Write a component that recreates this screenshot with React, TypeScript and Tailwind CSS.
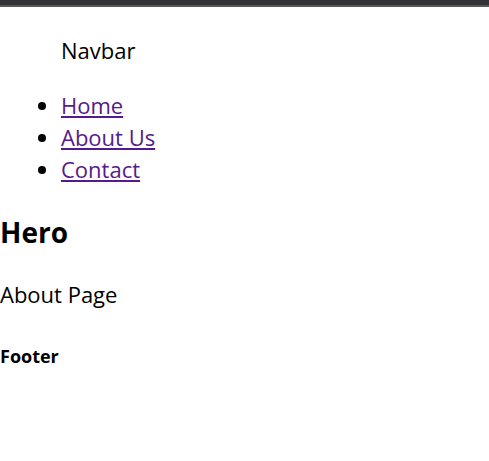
const links = ["Home", "About Us", "Contact"];

export default function App() {
  return (
    <div className="min-h-[461px] bg-white text-black font-['Open_Sans',sans-serif]">
      <div className="h-[5px] bg-[#333336]" />
      <div className="h-[2px] bg-[#565656]" />

      {/* navbar */}
      <nav className="pt-[27px]">
        <div className="pl-[61px] text-[22px] leading-[32px]">Navbar</div>
        <ul className="mt-[23px] list-disc pl-[61px] text-[22px] leading-[32px]">
          {links.map((l) => (
            <li key={l}>
              <a href="#" className="text-[#551a8b] underline">
                {l}
              </a>
            </li>
          ))}
        </ul>
      </nav>

      <section className="mt-[28px]">
        <h2 className="text-[28px] font-bold leading-[38px]">Hero</h2>
      </section>

      <main className="mt-[27px]">
        <p className="text-[22px] leading-[32px]">About Page</p>
      </main>

      <footer className="mt-[34px]">
        <h4 className="text-[18px] font-bold leading-[24px]">Footer</h4>
      </footer>
    </div>
  );
}
